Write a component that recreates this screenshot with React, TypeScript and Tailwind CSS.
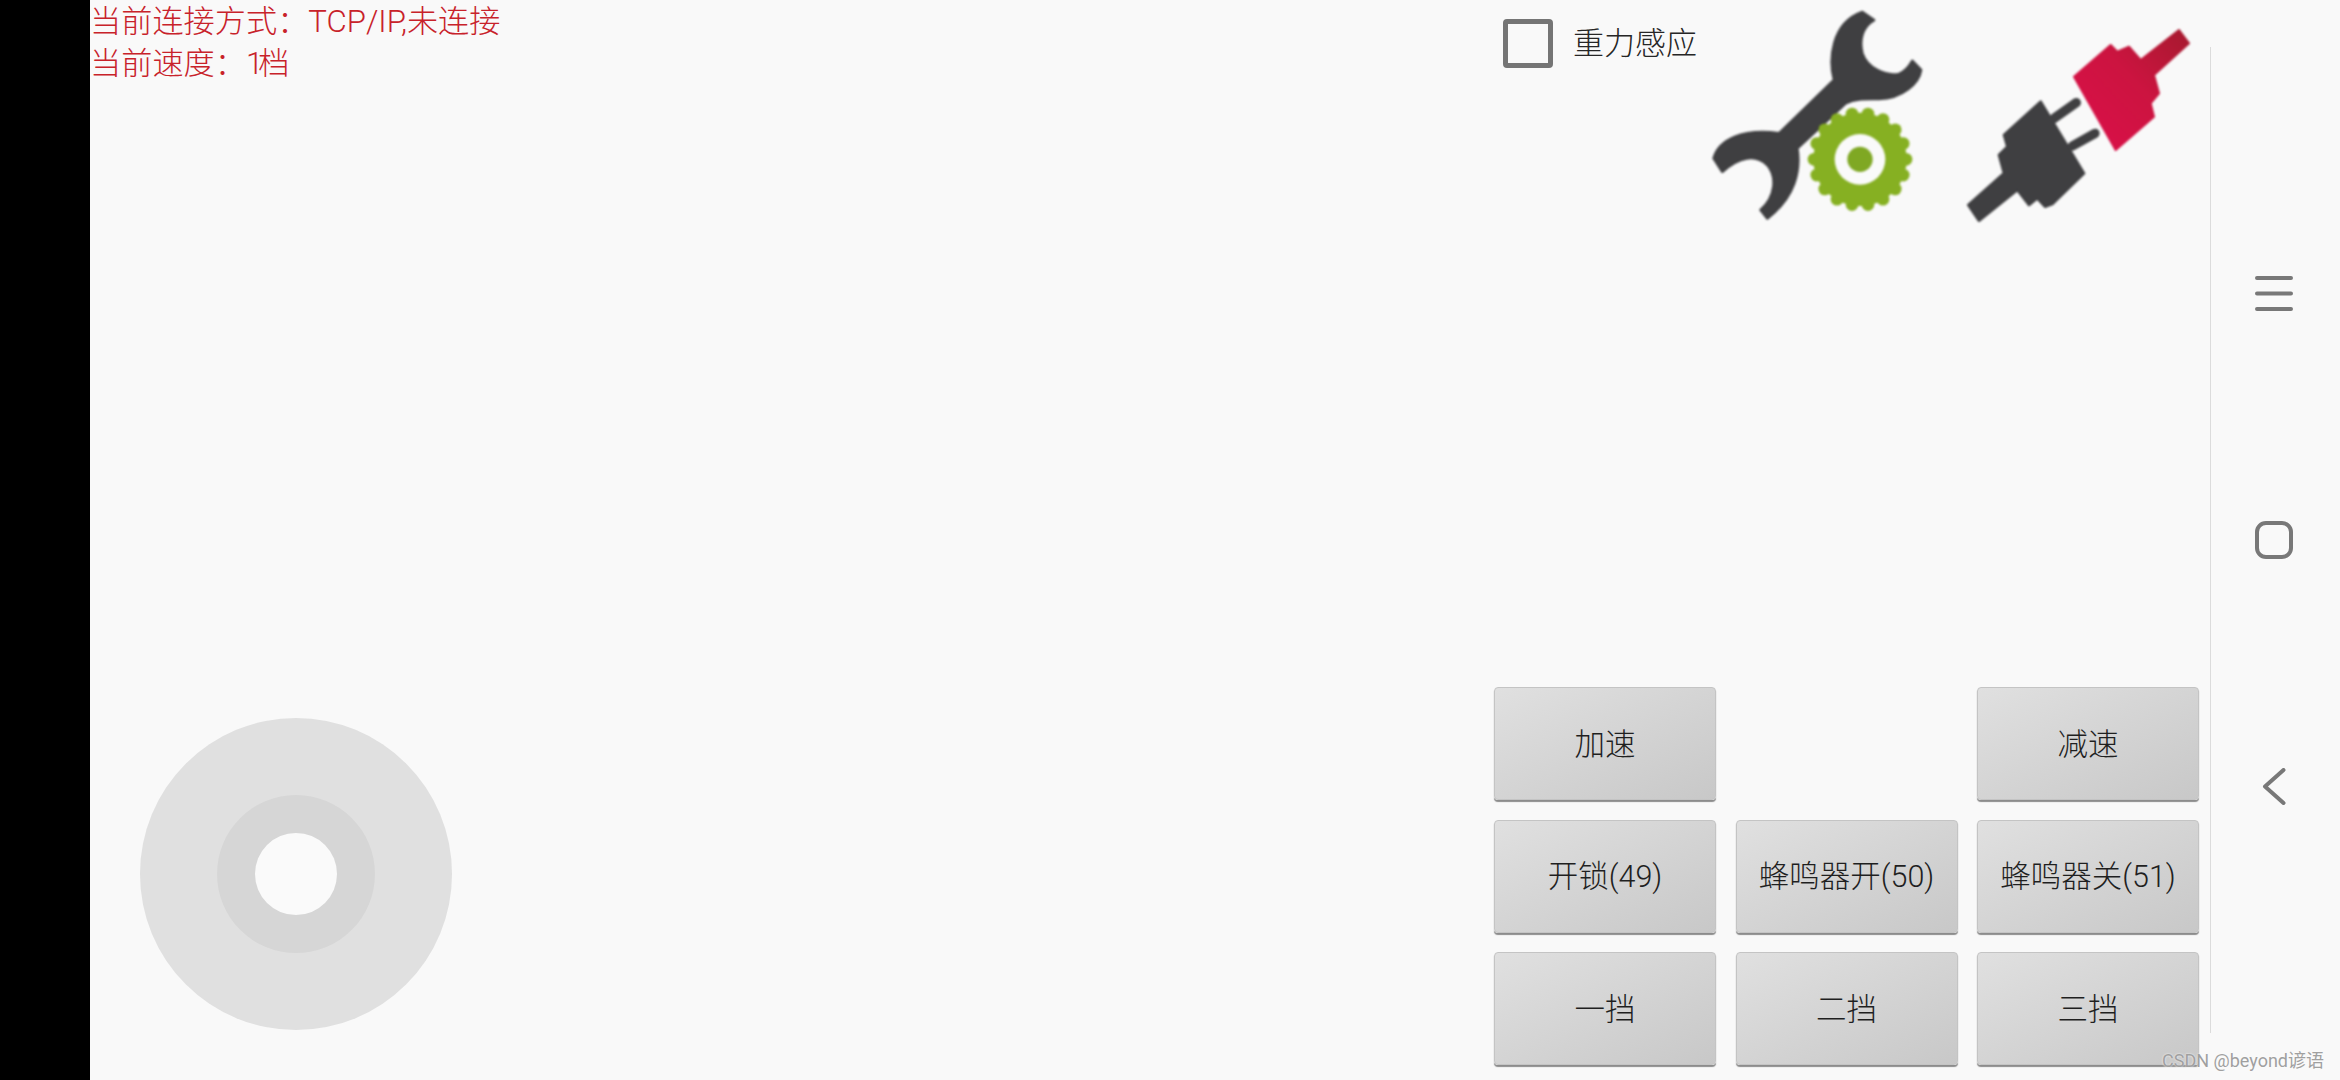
const FONT = "font-['Roboto','Noto_Sans_CJK_SC',sans-serif]";

function Wrench() {
  const teeth = Array.from({ length: 18 }, (_, i) => (i * Math.PI * 2) / 18);
  return (
    <svg viewBox="0 0 720 690" className="h-[230px] w-[240px] shrink-0 blur-[1px]">
      <path
        d="M490 36 L525 60 C490 80 480 120 490 160 C505 205 560 230 600 222 C620 215 630 200 640 183 L666 210 C660 250 610 295 540 297 C500 297 470 295 440 310 L295 445 C305 510 290 590 205 655 L185 630 C230 590 235 530 205 495 C170 460 120 470 70 515 L44 475 C60 420 130 385 240 400 L405 240 C390 180 395 70 490 36 Z"
        fill="#3f3f41"
        stroke="#3f3f41"
        strokeWidth="8"
        strokeLinejoin="round"
      />
      <circle cx="483" cy="478" r="140" fill="#86b022" />
      {teeth.map((a) => (
        <circle key={a} cx={483 + 138 * Math.cos(a)} cy={478 + 138 * Math.sin(a)} r="19" fill="#86b022" />
      ))}
      <circle cx="483" cy="478" r="76" fill="#fafafa" />
      <circle cx="483" cy="478" r="38" fill="#7fa823" />
    </svg>
  );
}

function Plug() {
  return (
    <svg viewBox="0 0 720 660" className="ml-[20px] mt-[10px] h-[220px] w-[240px] shrink-0 blur-[1px]">
      <defs>
        <linearGradient id="redPlug" x1="0" y1="1" x2="1" y2="0">
          <stop offset="0" stopColor="#dc0f4a" />
          <stop offset="0.55" stopColor="#cc1440" />
          <stop offset="1" stopColor="#a51a2e" />
        </linearGradient>
      </defs>
      <path
        d="M135 375 L245 275 L375 490 L280 582 L258 590 L235 565 L210 585 L175 540 L60 632 L28 585 L135 490 L120 435 L145 410 Z"
        fill="#3f3f41"
        stroke="#3f3f41"
        strokeWidth="8"
        strokeLinejoin="round"
      />
      <path d="M285 325 L352 278 M340 408 L408 370" stroke="#3f3f41" strokeWidth="28" strokeLinecap="round" />
      <path
        d="M345 200 L455 105 L475 125 L510 110 L545 150 L660 60 L690 100 L585 195 L600 250 L575 280 L585 320 L470 420 Z"
        fill="url(#redPlug)"
        stroke="url(#redPlug)"
        strokeWidth="6"
        strokeLinejoin="round"
      />
    </svg>
  );
}

function Btn({ label }: { label: string }) {
  return (
    <div className="flex h-[113px] w-[222px] items-center justify-center rounded-[4px] border border-[#c4c4c4] bg-gradient-to-br from-[#e0e0e0] to-[#c8c8c8] pt-[2px] text-[30.5px] font-light text-[#1f1f1f] shadow-[0_2px_1px_#8c8c8c]">
      {label}
    </div>
  );
}

export default function App() {
  return (
    <div className={`relative flex h-[1080px] w-[2340px] overflow-hidden bg-[#f9f9f9] ${FONT}`}>
      <div className="w-[90px] shrink-0 bg-black" />

      <main className="flex flex-1 justify-between pb-[15px] pr-[11px]">
        <div className="flex flex-col justify-between">
          <div className="pt-px text-[31.2px] font-light leading-[42px] text-[#c8222a]">
            <p>当前连接方式：TCP/IP,未连接</p>
            <p>
              当前速度：<span className="tracking-[-5px]">1</span>档
            </p>
          </div>
          <div className="mb-[35px] ml-[50px] flex h-[312px] w-[312px] items-center justify-center rounded-full bg-[#e0e0e0]">
            <div className="flex h-[158px] w-[158px] items-center justify-center rounded-full bg-[#d6d6d6]">
              <div className="h-[82px] w-[82px] rounded-full bg-[#fafafa]" />
            </div>
          </div>
        </div>

        <div className="flex w-[705px] flex-col justify-between">
          <div className="flex items-start">
            <div className="ml-[9px] mt-[19px] flex w-[197px] items-center gap-[20px]">
              <div className="h-[49px] w-[50px] shrink-0 rounded-[4px] border-[5px] border-[#757575]" />
              <span className="mt-[2px] whitespace-nowrap text-[31px] font-light text-[#262626]">重力感应</span>
            </div>
            <Wrench />
            <Plug />
          </div>

          <div className="grid grid-cols-[222px_222px_222px] gap-x-[19.5px] gap-y-[19.5px]">
            <Btn label="加速" />
            <div />
            <Btn label="减速" />
            <Btn label="开锁(49)" />
            <Btn label="蜂鸣器开(50)" />
            <Btn label="蜂鸣器关(51)" />
            <Btn label="一挡" />
            <Btn label="二挡" />
            <Btn label="三挡" />
          </div>
        </div>
      </main>

      <aside className="flex w-[130px] shrink-0">
        <div className="mb-[47px] mt-[47px] w-px bg-[#dcdcdc]" />
        <div className="flex flex-1 flex-col items-center gap-[209px] pr-[3px] pt-[275px]">
          <svg viewBox="0 0 38 37" className="h-[37px] w-[38px]" fill="none" stroke="#787878" strokeWidth="4" strokeLinecap="round">
            <path d="M2 3 H36 M2 18.5 H36 M2 34 H36" />
          </svg>
          <svg viewBox="0 0 38 38" className="h-[38px] w-[38px]" fill="none" stroke="#787878" strokeWidth="4">
            <rect x="2" y="2" width="34" height="34" rx="9" />
          </svg>
          <svg viewBox="0 0 38 37" className="h-[37px] w-[38px]" fill="none" stroke="#787878" strokeWidth="4" strokeLinecap="round" strokeLinejoin="round">
            <path d="M28.5 2 L10 18.5 L28.5 35" />
          </svg>
        </div>
      </aside>

      <div className="absolute bottom-[8px] right-[16px] text-[18px] leading-[22px] text-[#a0a0a0] [text-shadow:0_0_2px_#ffffff]">
        CSDN @beyond谚语
      </div>
    </div>
  );
}
